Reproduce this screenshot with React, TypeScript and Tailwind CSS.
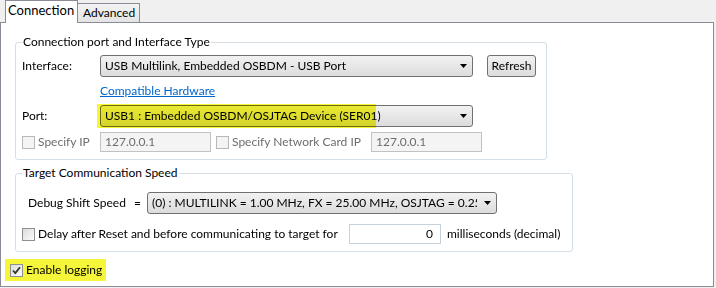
import React from "react";

const FONT = { fontFamily: 'Lato, "Noto Sans", Arial, sans-serif' };

function Arrow() {
  return (
    <svg width="7" height="4" viewBox="0 0 7 4" className="shrink-0">
      <path d="M0 0h7L3.5 4z" fill="#000" />
    </svg>
  );
}

function Select({ width, text, mark }: { width: number; text: string; mark?: number }) {
  return (
    <div
      className="relative flex h-[22px] shrink-0 items-center rounded-[3px] border border-[#707070] bg-gradient-to-b from-[#f2f2f2] to-[#dcdcdc] pl-[4px] pr-[5px]"
      style={{ width }}
    >
      <span className="mr-[7px] flex-1 overflow-hidden whitespace-nowrap text-black">{text}</span>
      <Arrow />
      {mark ? (
        <div
          className="pointer-events-none absolute left-[-4px] top-[-2px] h-[24px] bg-[#f6f634] mix-blend-multiply"
          style={{ width: mark }}
        />
      ) : null}
    </div>
  );
}

function Check({ disabled, checked }: { disabled?: boolean; checked?: boolean }) {
  return (
    <div
      className={`flex h-[13px] w-[13px] shrink-0 items-center justify-center border ${
        disabled ? "border-[#b8b8b8] bg-[#f4f4f4]" : "border-[#8e8f8f] bg-gradient-to-br from-[#dcdcdc] to-[#fbfbfb]"
      }`}
    >
      {checked ? (
        <svg width="9" height="9" viewBox="0 0 9 9">
          <path d="M1 4.5l2.3 2.5L8 1.2" stroke="#2d3a20" strokeWidth="1.8" fill="none" />
        </svg>
      ) : null}
    </div>
  );
}

function Group({ title, className, children }: { title: string; className: string; children: React.ReactNode }) {
  return (
    <div className={`relative rounded-[3px] border border-[#d5dfe5] ${className}`}>
      <span className="absolute left-[6px] top-[-9px] whitespace-nowrap bg-white px-[1px] leading-[16px] text-black">
        {title}
      </span>
      {children}
    </div>
  );
}

export default function App() {
  return (
    <div className="h-[288px] w-[716px] whitespace-nowrap bg-[#f0f0f0] text-[12px] text-black" style={FONT}>
      {/* tabs */}
      <div className="relative z-10 flex h-[22px] items-end pl-[5px]">
        <div className="mb-[-1px] flex h-[23px] w-[73px] items-center border border-b-0 border-[#898c95] bg-white pb-[2px] pl-[2px] text-[13px]">
          Connection
        </div>
        <div className="flex h-[19px] w-[62px] items-center border border-b-0 border-l-0 border-[#898c95] bg-gradient-to-b from-[#f3f3f3] to-[#e4e4e4] pl-[5px]">
          Advanced
        </div>
      </div>

      {/* panel */}
      <div className="h-[265px] w-[714px] border border-[#898c95] bg-white">
        <Group title="Connection port and Interface Type" className="ml-[14px] mt-[19px] h-[118px] w-[532px] pl-[6px] pt-[12px]">
          <div className="flex h-[22px] items-center">
            <span className="w-[78px] shrink-0">Interface:</span>
            <Select width={373} text="USB Multilink, Embedded OSBDM - USB Port" />
            <button className="ml-[14px] h-[22px] w-[49px] shrink-0 rounded-[3px] border border-[#707070] bg-gradient-to-b from-[#f2f2f2] to-[#dcdcdc]">
              Refresh
            </button>
          </div>
          <div className="ml-[78px] mt-[7px] h-[14px] leading-[14px] text-[#0066cc] underline">Compatible Hardware</div>
          <div className="mt-[7px] flex h-[22px] items-center">
            <span className="w-[78px] shrink-0">Port:</span>
            <Select width={373} text="USB1 : Embedded OSBDM/OSJTAG Device (SER01)" mark={279} />
          </div>
          <div className="mt-[5px] flex h-[20px] items-center text-[#6d6d6d]">
            <Check disabled />
            <span className="ml-[3px] w-[62px] shrink-0">Specify IP</span>
            <div className="flex h-[20px] w-[111px] shrink-0 items-center border border-[#c2c2c2] bg-[#f4f4f4] pl-[4px]">127.0.0.1</div>
            <div className="ml-[5px]">
              <Check disabled />
            </div>
            <span className="ml-[3px] w-[139px] shrink-0">Specify Network Card IP</span>
            <div className="flex h-[20px] w-[111px] shrink-0 items-center border border-[#c2c2c2] bg-[#f4f4f4] pl-[4px]">127.0.0.1</div>
          </div>
        </Group>

        <Group title="Target Communication Speed" className="ml-[14px] mt-[13px] h-[79px] w-[558px] pl-[6px] pt-[18px]">
          <div className="flex h-[22px] items-center">
            <span className="ml-[6px] w-[106px] shrink-0">Debug Shift Speed</span>
            <span className="w-[13px] shrink-0">=</span>
            <Select width={350} text="(0) : MULTILINK = 1.00 MHz, FX = 25.00 MHz, OSJTAG = 0.25 MHz" />
          </div>
          <div className="mt-[10px] flex h-[20px] items-center">
            <Check />
            <span className="ml-[3px] w-[311px] shrink-0">Delay after Reset and before communicating to target for</span>
            <div className="flex h-[20px] w-[92px] shrink-0 items-center justify-end border border-[#c5d2dc] bg-white pr-[7px]">0</div>
            <span className="ml-[6px]">milliseconds (decimal)</span>
          </div>
        </Group>

        <div className="ml-[4px] mt-[7px] flex h-[22px] w-[101px] items-center bg-[#f5f53a] pl-[5px]">
          <Check checked />
          <span className="ml-[3px]">Enable logging</span>
        </div>
      </div>
    </div>
  );
}
